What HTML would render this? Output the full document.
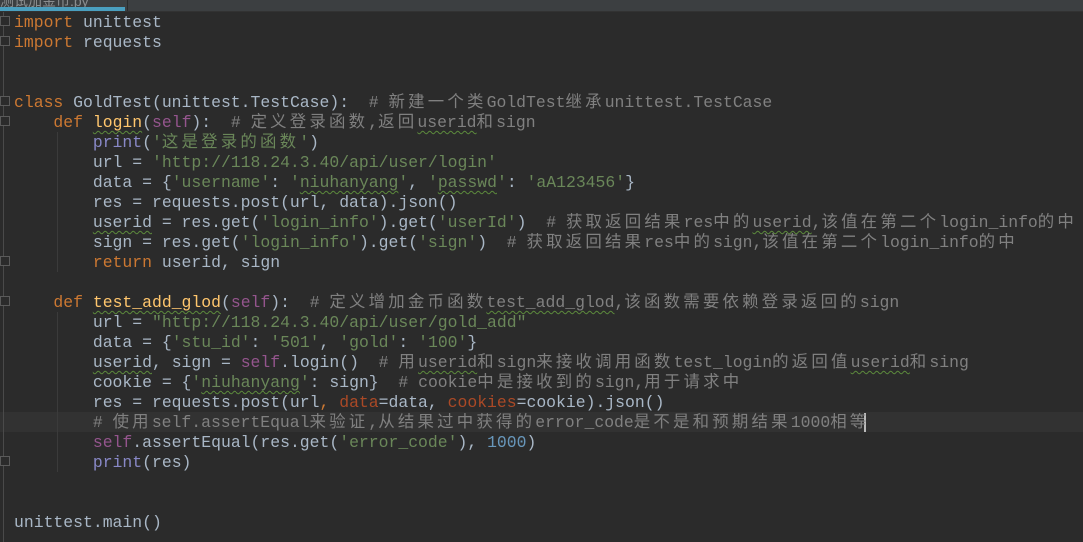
<!DOCTYPE html>
<html><head><meta charset="utf-8"><style>
html,body{margin:0;padding:0;width:1083px;height:542px;overflow:hidden;background:#2b2b2b}
.tabbar{position:absolute;left:0;top:0;width:1083px;height:11px;background:#3c3f41;border-bottom:1px solid #323232}
.tab{position:absolute;left:0;top:-9px;width:125px;height:16px;color:#8a8d8f;font:14px "Liberation Sans","Noto Sans CJK SC",sans-serif;white-space:nowrap;overflow:hidden}
.tabline{position:absolute;left:0;top:7px;width:125px;height:4px;background:#4a9fbf}
.sep{position:absolute;left:127px;top:0;width:1px;height:11px;background:#2b2b2b}
.hl{position:absolute;left:0;top:412px;width:1083px;height:20px;background:#323232}
.caret{position:absolute;left:864px;top:413px;width:2px;height:19px;background:#bbbbbb}
.gut{position:absolute;left:3px;top:12px;width:1px;height:530px;background:#4a4a4a}
.guide{position:absolute;width:1px;background:#3b3b3b}
.code{position:absolute;left:14px;top:13px;font-family:"Liberation Mono","Noto Sans CJK SC",monospace;font-size:16.43px;line-height:20px;color:#a9b7c6;white-space:pre}
.k{color:#cc7832}.s{color:#6a8759}.c{color:#808080}.f{color:#ffc66d}.sf{color:#94558d}.b{color:#8888c6}.n{color:#6897bb}.a{color:#aa4926}
i{font-style:normal;letter-spacing:3.2px}
.w{text-decoration:underline wavy #5c8a3c;text-underline-offset:3px;text-decoration-thickness:1px}
.fold{position:absolute;left:0;width:8px;height:8px;border:1px solid #5a5a5a;background:#2b2b2b}
</style></head><body>
<div class="tabbar"><div class="tab">测试加金币.py</div><div class="tabline"></div><div class="sep"></div></div>
<div class="hl"></div>
<div class="gut"></div>
<div class="guide" style="left:57px;top:132px;height:140px"></div>
<div class="guide" style="left:57px;top:312px;height:160px"></div>
<div class="fold" style="top:16px"></div>
<div class="fold" style="top:36px"></div>
<div class="fold" style="top:96px"></div>
<div class="fold" style="top:116px"></div>
<div class="fold" style="top:256px"></div>
<div class="fold" style="top:296px"></div>
<div class="fold" style="top:456px"></div>
<div class="caret"></div>
<div class="code"><span class="k">import</span> unittest
<span class="k">import</span> requests


<span class="k">class</span> GoldTest(unittest.TestCase):  <span class="c"># <i>新建一个类</i>GoldTest<i>继承</i>unittest.TestCase</span>
    <span class="k">def</span> <span class="f w">login</span>(<span class="sf">self</span>):  <span class="c"># <i>定义登录函数</i>,<i>返回</i><span class="w">userid</span><i>和</i>sign</span>
        <span class="b">print</span>(<span class="s">'<i>这是登录的函数</i>'</span>)
        url = <span class="s">'http://118.24.3.40/api/user/login'</span>
        data = {<span class="s">'username'</span>: <span class="s">'<span class="w">niuhanyang</span>'</span>, <span class="s">'<span class="w">passwd</span>'</span>: <span class="s">'aA123456'</span>}
        res = requests.post(url, data).json()
        <span class="w">userid</span> = res.get(<span class="s">'login_info'</span>).get(<span class="s">'userId'</span>)  <span class="c"># <i>获取返回结果</i>res<i>中的</i><span class="w">userid</span>,<i>该值在第二个</i>login_info<i>的中</i></span>
        sign = res.get(<span class="s">'login_info'</span>).get(<span class="s">'sign'</span>)  <span class="c"># <i>获取返回结果</i>res<i>中的</i>sign,<i>该值在第二个</i>login_info<i>的中</i></span>
        <span class="k">return</span> userid, sign

    <span class="k">def</span> <span class="f w">test_add_glod</span>(<span class="sf">self</span>):  <span class="c"># <i>定义增加金币函数</i><span class="w">test_add_glod</span>,<i>该函数需要依赖登录返回的</i>sign</span>
        url = <span class="s">"http://118.24.3.40/api/user/gold_add"</span>
        data = {<span class="s">'stu_id'</span>: <span class="s">'501'</span>, <span class="s">'gold'</span>: <span class="s">'100'</span>}
        <span class="w">userid</span>, sign = <span class="sf">self</span>.login()  <span class="c"># <i>用</i><span class="w">userid</span><i>和</i>sign<i>来接收调用函数</i>test_login<i>的返回值</i><span class="w">userid</span><i>和</i>sing</span>
        cookie = {<span class="s">'<span class="w">niuhanyang</span>'</span>: sign}  <span class="c"># cookie<i>中是接收到的</i>sign,<i>用于请求中</i></span>
        res = requests.post(url<span class="k">,</span> <span class="a">data</span>=data, <span class="a">cookies</span>=cookie).json()
        <span class="c"># <i>使用</i>self.assertEqual<i>来验证</i>,<i>从结果过中获得的</i>error_code<i>是不是和预期结果</i>1000<i>相等</i></span>
        <span class="sf">self</span>.assertEqual(res.get(<span class="s">'error_code'</span>), <span class="n">1000</span>)
        <span class="b">print</span>(res)


unittest.main()</div>
</body></html>
